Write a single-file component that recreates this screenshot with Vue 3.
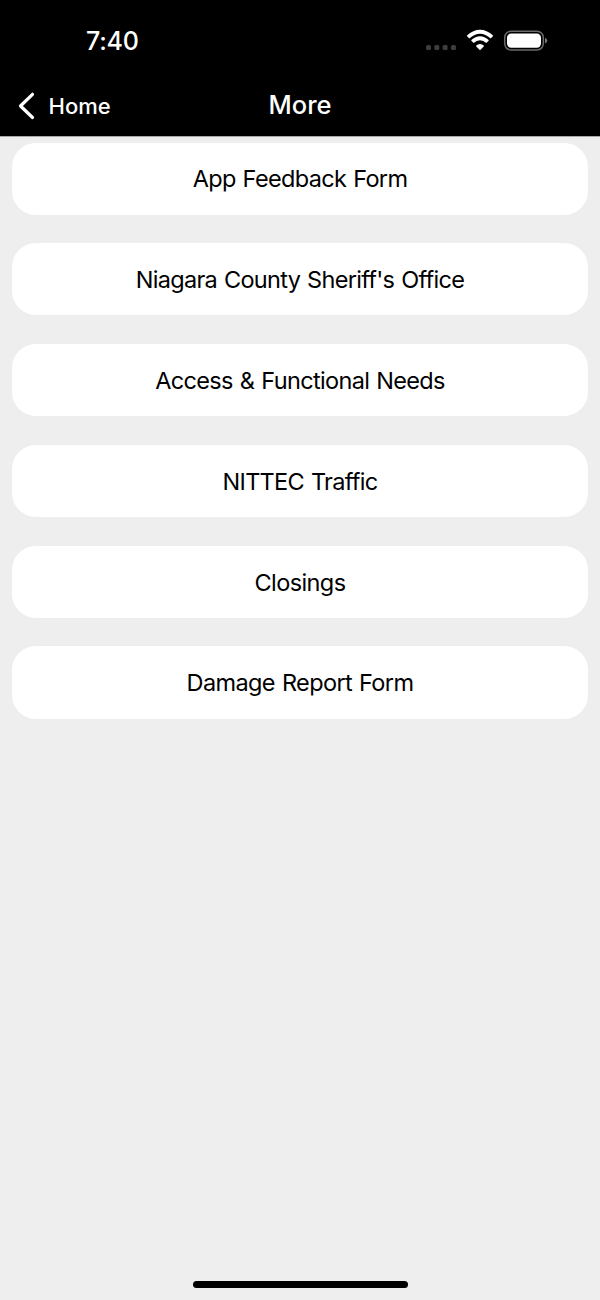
<script setup>
const items = [
  { label: 'App Feedback Form', tracking: -0.66 },
  { label: "Niagara County Sheriff's Office", tracking: -0.7 },
  { label: 'Access & Functional Needs', tracking: -0.65 },
  { label: 'NITTEC Traffic', tracking: -0.7 },
  { label: 'Closings', tracking: -0.6 },
  { label: 'Damage Report Form', tracking: -0.62 },
]
</script>

<template>
  <div class="screen">
    <header class="header">
      <div class="status">
        <span class="time">7:40</span>
        <svg class="indicators" width="124" height="26" viewBox="0 0 124 26">
          <g fill="#3d3d3d">
            <rect x="1" y="17" width="5" height="5" rx="1.5" />
            <rect x="9.3" y="17" width="5" height="5" rx="1.5" />
            <rect x="17.6" y="17" width="5" height="5" rx="1.5" />
            <rect x="26" y="17" width="5" height="5" rx="1.5" />
          </g>
          <g fill="none" stroke="#fff" stroke-width="3.8">
            <path d="M43 9.2Q55 -1.6 67 9.2" />
            <path d="M47.3 13.7Q55 6.800 62.700 13.700" />
          </g>
          <path d="M50.800 17.900Q55 14.200 59.200 17.900L55 22.200Z" fill="#fff" />
          <rect x="79.700" y="3.200" width="38.600" height="18.800" rx="6.300" fill="none" stroke="#6b6b6b" stroke-width="1.500" />
          <rect x="82" y="5.500" width="34" height="14.200" rx="4.200" fill="#fff" />
          <path d="M120 9.700Q122.300 10.500 122.300 12.600T120 15.500Z" fill="#777" />
        </svg>
      </div>
      <nav class="nav">
        <a class="back">
          <svg width="18" height="28" viewBox="0 0 18 28">
            <path d="M15.5 2.3L3.5 14L15.5 25.5" fill="none" stroke="#fff" stroke-width="3.2" stroke-linecap="round" stroke-linejoin="round" />
          </svg>
          <span>Home</span>
        </a>
        <h1 class="title">More</h1>
      </nav>
    </header>
    <main class="list">
      <button v-for="item in items" :key="item.label" class="card">
        <span :style="{ letterSpacing: item.tracking + 'px' }">{{ item.label }}</span>
      </button>
    </main>
    <footer class="footer"><div class="home-bar"></div></footer>
  </div>
</template>

<style>
body {
  background: #eee;
}
</style>

<style scoped>
.screen {
  width: 600px;
  height: 1300px;
  display: flex;
  flex-direction: column;
  background: #eee;
  color: #000;
  font-family: Inter, "Liberation Sans", sans-serif;
  overflow: hidden;
}
.header {
  height: 136px;
  flex: none;
  background: #000;
  border-bottom: 1px solid #a8a8a8;
  color: #fff;
}
.status {
  height: 76px;
  box-sizing: border-box;
  padding: 27px 51px 0 86px;
  display: flex;
  align-items: flex-start;
  justify-content: space-between;
}
.time {
  font-size: 25px;
  line-height: 28px;
  font-weight: 550;
  letter-spacing: -0.2px;
}
.indicators {
  display: block;
  margin-top: 1px;
}
.nav {
  height: 60px;
  display: grid;
  grid-template-columns: 1fr auto 1fr;
  align-items: start;
}
.back {
  display: flex;
  align-items: center;
  gap: 13.5px;
  padding: 15px 0 0 17px;
  font-size: 22px;
  line-height: 30px;
  font-weight: 500;
}
.title {
  margin: 13px 0 0;
  font-size: 25.5px;
  line-height: 32px;
  font-weight: 500;
}
.list {
  flex: 1;
  display: flex;
  flex-direction: column;
  gap: 28.6px;
  padding: 5.5px 12px 0;
}
.card {
  height: 72.2px;
  flex: none;
  border: 0;
  padding: 1.8px 0 0;
  border-radius: 24px;
  background: #fff;
  color: #000;
  font-family: inherit;
  font-size: 23.5px;
  line-height: 30px;
  word-spacing: 1px;
  text-align: center;
  white-space: nowrap;
}
.footer {
  height: 18.6px;
  flex: none;
  display: flex;
  justify-content: center;
}
.home-bar {
  width: 215px;
  height: 7px;
  border-radius: 4px;
  background: #000;
}
</style>
